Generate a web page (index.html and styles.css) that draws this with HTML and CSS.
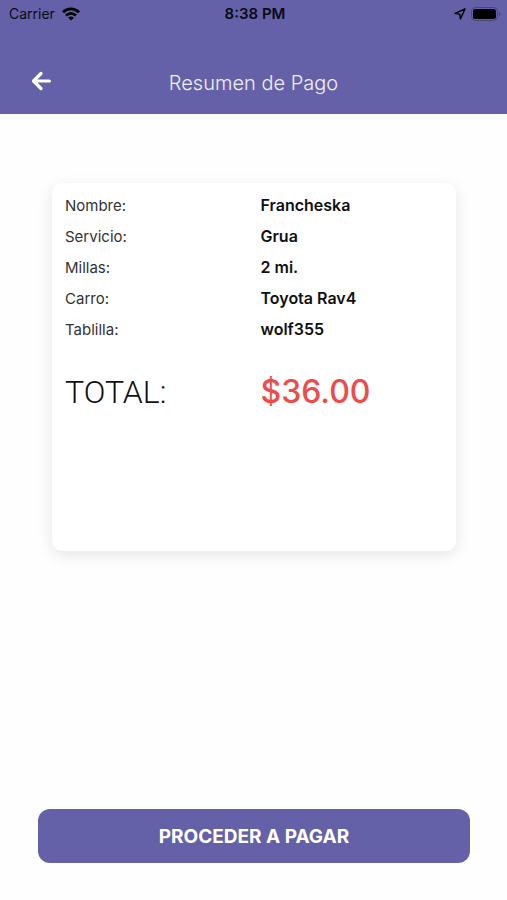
FILE: index.html
```html
<!DOCTYPE html>
<html lang="es">
<head>
<meta charset="UTF-8" />
<meta name="viewport" content="width=device-width, initial-scale=1" />
<title>Resumen de Pago</title>
<link rel="stylesheet" href="styles.css">
</head>
<body>
<header>
<div class="statusbar">
	<div class="carrier">
		<span>Carrier</span>
		<svg width="18" height="14" viewBox="0 0 18 14" fill="none" stroke="#000" stroke-width="2.8">
			<path d="M1 5.2a11.4 11.4 0 0 1 16 0"/>
			<path d="M4 8.5a7 7 0 0 1 10 0"/>
			<path d="M9 13.6L6.2 10.8a4 4 0 0 1 5.6 0z" fill="#000" stroke="none"/>
		</svg>
	</div>
	<div class="time">8:38 PM</div>
	<div class="indicators">
		<svg width="12" height="12" viewBox="0 0 12 12" fill="none" stroke="#000" stroke-width="1.4" stroke-linejoin="round">
			<path d="M11 1L1 5.4l4.8.8.6 4.8z"/>
		</svg>
		<svg width="30" height="14" viewBox="0 0 30 14">
			<rect x="0.5" y="0.5" width="26" height="13" rx="4" fill="none" stroke="#48457b"/>
			<rect x="2" y="2" width="23" height="10" rx="2.5" fill="#000"/>
			<path d="M28 4.8a2.4 2.4 0 0 1 0 4.4z" fill="#48457b"/>
		</svg>
	</div>
</div>
<nav class="navbar">
	<button type="button" class="back" aria-label="Atrás">
		<svg width="20" height="20" viewBox="0 0 20 20" fill="none" stroke="#fff" stroke-width="3.2" stroke-linecap="round" stroke-linejoin="round">
			<path d="M10 2.5L2.5 10l7.5 7.5M3 10H18.4"/>
		</svg>
	</button>
	<h1>Resumen de Pago</h1>
</nav>
</header>

<main>
<dl class="card">
	<dt>Nombre:</dt>
	<dd>Francheska</dd>
	<dt>Servicio:</dt>
	<dd>Grua</dd>
	<dt>Millas:</dt>
	<dd>2 mi.</dd>
	<dt>Carro:</dt>
	<dd>Toyota Rav4</dd>
	<dt>Tablilla:</dt>
	<dd>wolf355</dd>
	<dt class="total">TOTAL:</dt>
	<dd class="total amount">$36.00</dd>
</dl>
</main>

<footer>
<button type="button" class="pay">PROCEDER A PAGAR</button>
</footer>
</body>
</html>
```
FILE: styles.css
```css
* {
	margin: 0;
	padding: 0;
	box-sizing: border-box;
}

body {
	display: flex;
	flex-direction: column;
	min-height: 100vh;
	background-color: #fefefe;
	font: 16px Inter, "Liberation Sans", sans-serif;
	color: #111;
}

svg {
	display: block;
}

button {
	border: none;
	font: inherit;
	cursor: pointer;
}

header {
	height: 114px;
	background-color: #6561a9;
}

.statusbar {
	display: grid;
	grid-template-columns: 1fr auto 1fr;
	align-items: center;
	height: 27px;
	padding: 0 6px 0 9px;
	font-size: 14px;
	color: #0a0a14;
}

.carrier, .indicators {
	display: flex;
	align-items: center;
	gap: 7px;
}

.indicators {
	justify-content: flex-end;
	gap: 5px;
}

.time {
	font-size: 15px;
	font-weight: 600;
}

.navbar {
	display: grid;
	grid-template-columns: 20px 1fr 20px;
	align-items: start;
	padding: 40px 31px 0;
}

.back {
	height: 28px;
	background: none;
}

.navbar h1 {
	font-size: 20px;
	font-weight: 300;
	line-height: 32px;
	text-align: center;
	color: #f0effa;
}

main {
	flex: 1;
	padding: 69px 51px 0 52px;
}

.card {
	display: grid;
	grid-template-columns: 1fr 1fr;
	align-content: start;
	min-height: 368px;
	padding: 7px 0 7px 13px;
	border-radius: 10px;
	background-color: #fff;
	box-shadow: 0 4px 16px rgba(0, 0, 0, .1);
	line-height: 31px;
}

.card dt {
	font-size: 15px;
	color: #333;
}

.card dd {
	font-weight: 600;
}

.card .total {
	margin-top: 27px;
	font-size: 32px;
	line-height: 40px;
}

.card dt.total {
	font-family: Roboto, Inter, sans-serif;
	font-weight: 300;
	color: #111;
}

.card .amount {
	font-weight: 500;
	color: #ee4b4b;
}

footer {
	padding: 0 37px 37px 38px;
}

.pay {
	width: 100%;
	height: 54px;
	border-radius: 12px;
	background-color: #6561a9;
	font-size: 19px;
	font-weight: 700;
	color: #fff;
}
```
